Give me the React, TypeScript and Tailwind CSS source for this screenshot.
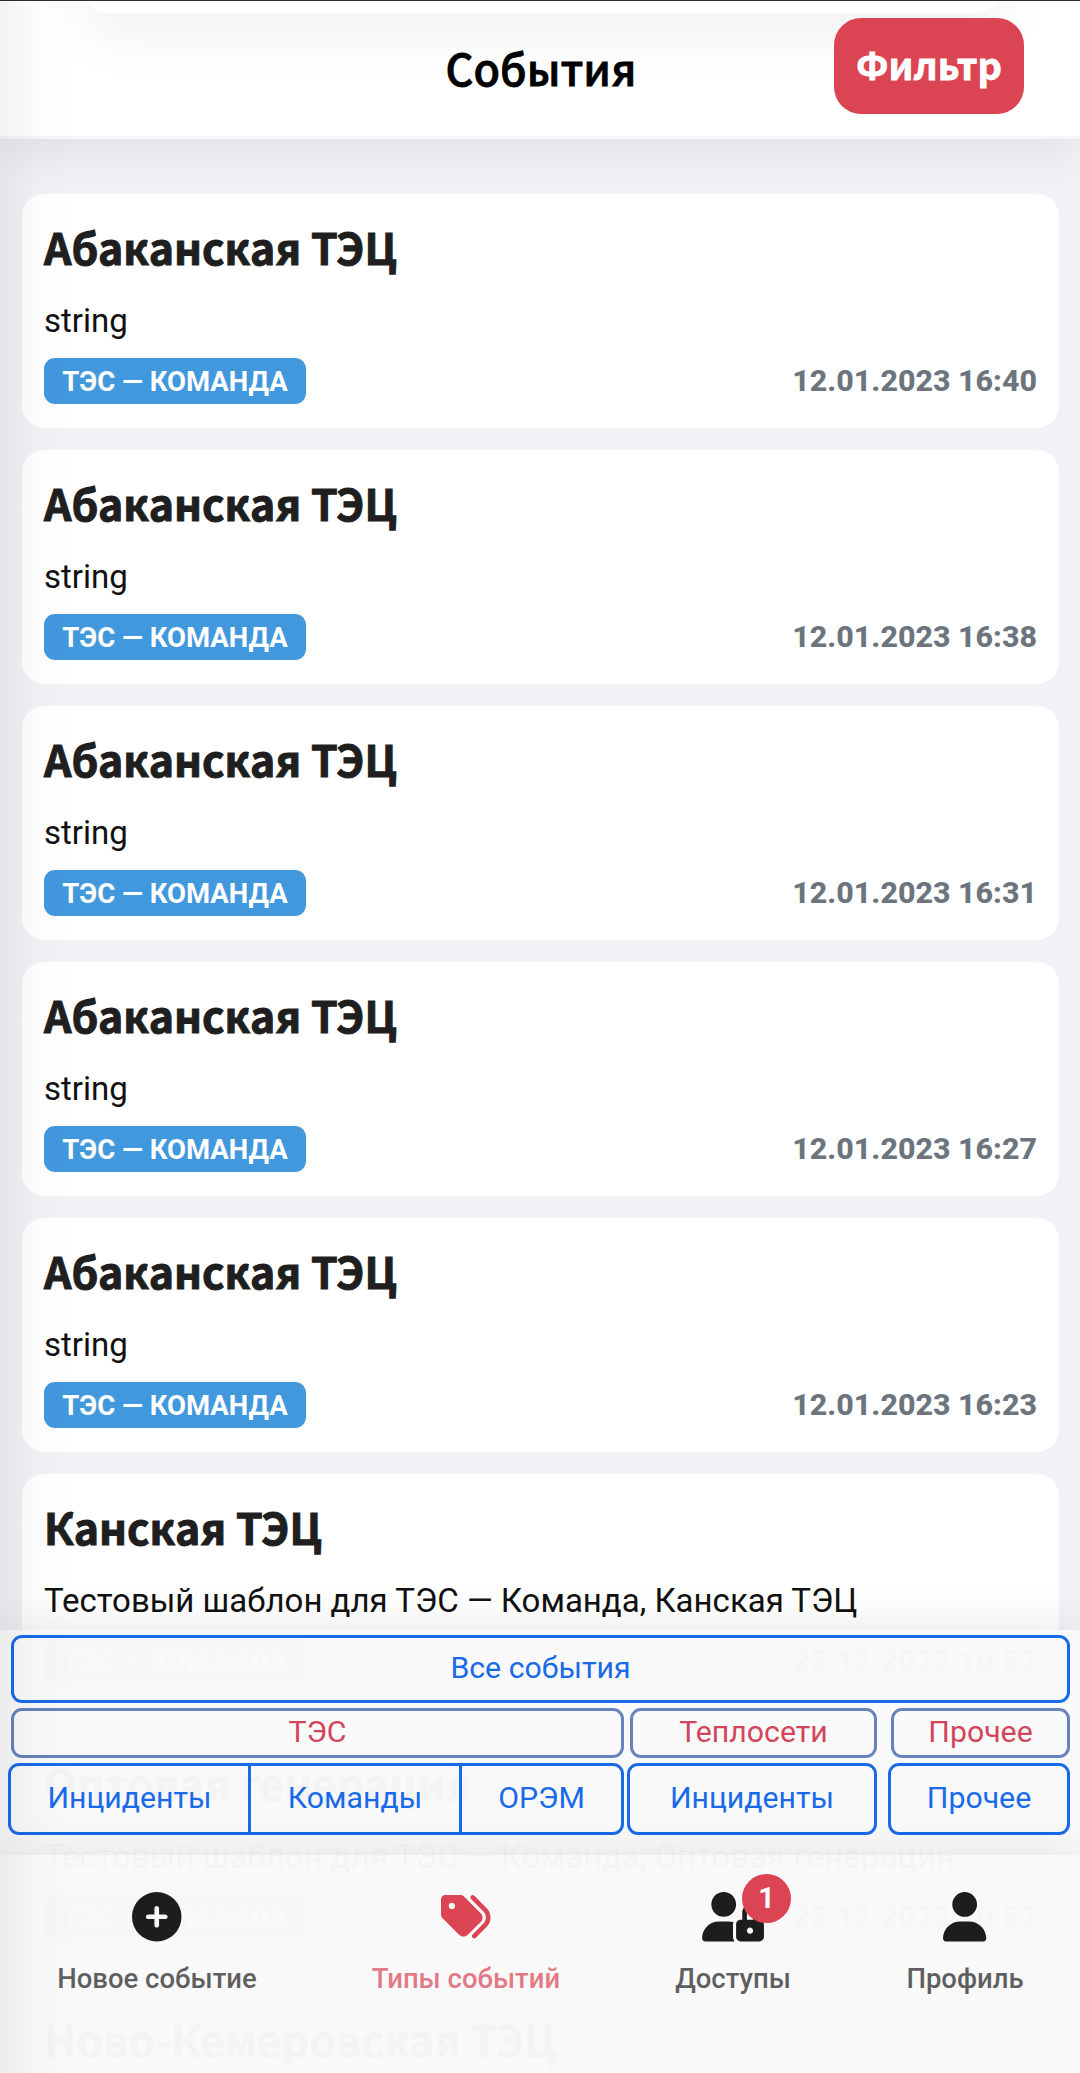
import type { ReactNode } from "react"
import { FaCirclePlus, FaTags, FaUser } from "react-icons/fa6"

interface EventItem {
  title: string
  text: string
  date: string
}

const events: EventItem[] = [
  { title: "Абаканская ТЭЦ", text: "string", date: "12.01.2023 16:40" },
  { title: "Абаканская ТЭЦ", text: "string", date: "12.01.2023 16:38" },
  { title: "Абаканская ТЭЦ", text: "string", date: "12.01.2023 16:31" },
  { title: "Абаканская ТЭЦ", text: "string", date: "12.01.2023 16:27" },
  { title: "Абаканская ТЭЦ", text: "string", date: "12.01.2023 16:23" },
  { title: "Канская ТЭЦ", text: "Тестовый шаблон для ТЭС — Команда, Канская ТЭЦ", date: "22.12.2022 10:52" },
  { title: "Оптовая генерация", text: "Тестовый шаблон для ТЭС — Команда, Оптовая генерация", date: "22.12.2022 10:52" },
  { title: "Ново-Кемеровская ТЭЦ", text: "", date: "" },
]

function UserLockIcon() {
  return (
    <svg viewBox="0 0 640 512" className="h-[49.5px] w-[62px]" fill="currentColor">
      <path d="M592 288H576V212.7c0-41.84-30.03-80.04-71.66-84.27C456.5 123.6 416 161.1 416 208V288h-16C373.6 288 352 309.6 352 336v128c0 26.4 21.6 48 48 48h192c26.4 0 48-21.6 48-48v-128C640 309.6 618.4 288 592 288zM496 432c-17.62 0-32-14.38-32-32s14.38-32 32-32s32 14.38 32 32S513.6 432 496 432zM528 288h-64V208c0-17.62 14.38-32 32-32s32 14.38 32 32V288z" />
      <path d="M224 256c70.7 0 128-57.31 128-128S294.7 0 224 0C153.3 0 96 57.31 96 128S153.3 256 224 256zM320 336c0-8.672 1.738-16.87 4.303-24.7C308.6 306.6 291.9 304 274.7 304H173.3C77.61 304 0 381.7 0 477.3C0 496.5 15.52 512 34.67 512h301.7C326.3 498.6 320 482.1 320 464V336z" />
    </svg>
  )
}

function Header() {
  return (
    <header className="relative z-10 h-[139px] border-b-[3px] border-[#f6f6f9] bg-white shadow-[0_14px_48px_rgba(0,0,0,0.07)]">
      <div className="absolute inset-0 overflow-hidden border-t border-[#2f2b30]">
        {/* Нижний край панели, уехавшей за верх экрана */}
        <div className="absolute -top-[60px] left-[82px] h-[72px] w-[920px] rounded-[27px] bg-white shadow-[0_22px_60px_rgba(0,0,0,0.06)]" />
      </div>
      <div className="relative grid h-full grid-cols-3">
        <h1 className="col-start-2 pt-[35px] pl-[2px] text-center font-['Noto_Sans_CJK_SC',sans-serif] text-[43.2px] leading-[64px] font-medium text-black [-webkit-text-stroke:0.8px_#000]">
          События
        </h1>
        <div className="flex justify-end pt-[18px] pr-[56px]">
          <button className="h-[96px] w-[190px] rounded-[27px] bg-[#db4453] pb-[4px] font-['Noto_Sans_CJK_SC',sans-serif] text-[38px] leading-[56px] font-bold text-white [-webkit-text-stroke:0.8px_#fff]">
            Фильтр
          </button>
        </div>
      </div>
    </header>
  )
}

function EventCard({ title, text, date }: EventItem) {
  return (
    <article className="h-[234px] shrink-0 rounded-[22px] bg-white px-[22px] pt-[22px] whitespace-nowrap">
      <h2 className="font-['Noto_Sans_CJK_SC',sans-serif] text-[42.8px] leading-[60px] font-bold text-[#1f1f1f] [-webkit-text-stroke:1px_#1f1f1f]">
        {title}
      </h2>
      {text && (
        <>
          <p className="mt-[20px] text-[33px] leading-[50px] text-[#111]">{text}</p>
          <div className="mt-3 flex items-center justify-between">
            <span className="flex h-[46px] w-[262px] items-center justify-center rounded-[11px] bg-[#4298dd] pt-[1px] text-[27.5px] font-bold text-white">
              ТЭС — КОМАНДА
            </span>
            <time className="pb-[1px] text-[30.4px] leading-[45px] font-extrabold text-[#6c757d]">{date}</time>
          </div>
        </>
      )}
    </article>
  )
}

function Caption({ children }: { children: ReactNode }) {
  return (
    <div className="flex h-[50px] items-center justify-center rounded-[11px] border-3 border-[#6683bb] pb-[2px] text-[#d3455a]">
      {children}
    </div>
  )
}

function FilterPanel() {
  return (
    <section className="h-[225px] bg-[#f9f9f9]/98 pt-[5px] text-[30.25px] text-[#186ae9] shadow-[0_-4px_44px_rgba(0,0,0,0.09)]">
      <button className="ml-[11px] flex h-[68px] w-[1059px] items-center justify-center rounded-[11px] border-3 border-[#186ae9] pb-[2px]">
        Все события
      </button>
      <div className="mt-[5px] ml-[11px] grid w-[1059px] grid-cols-[613px_247px_179px] justify-between">
        <Caption>ТЭС</Caption>
        <div className="-ml-[4px] mr-[4px]">
          <Caption>Теплосети</Caption>
        </div>
        <Caption>Прочее</Caption>
      </div>
      <div className="mt-[5px] ml-2 flex h-[72px]">
        <div className="flex w-[616px] divide-x-3 divide-[#186ae9] rounded-[11px] border-3 border-[#186ae9]">
          <button className="w-[240px] pb-[2px]">Инциденты</button>
          <button className="w-[211px] pb-[2px]">Команды</button>
          <button className="flex-1 pb-[2px]">ОРЭМ</button>
        </div>
        <button className="ml-[3px] w-[250px] rounded-[11px] border-3 border-[#186ae9] pb-[2px]">Инциденты</button>
        <button className="ml-[11px] w-[182px] rounded-[11px] border-3 border-[#186ae9] pb-[2px]">Прочее</button>
      </div>
    </section>
  )
}

function NavItem({ icon, label, className = "" }: { icon: ReactNode; label: string; className?: string }) {
  return (
    <a className={`flex flex-col items-center whitespace-nowrap ${className}`}>
      <span className="relative flex h-[50px] items-center text-[49.5px]">{icon}</span>
      <span className="mt-[20px] text-[27.5px] leading-[34px] font-medium opacity-70">{label}</span>
    </a>
  )
}

function BottomNav() {
  return (
    <nav className="relative grid h-[218px] grid-cols-[314px_304px_230px_234px] items-start bg-[#f9f9f9]/98 pt-[37px] text-[#1d1d1d] shadow-[0_-4px_36px_rgba(0,0,0,0.08)]">
      <NavItem icon={<FaCirclePlus />} label="Новое событие" />
      <NavItem className="text-[#db4453]" icon={<FaTags />} label="Типы событий" />
      <NavItem
        icon={
          <>
            <UserLockIcon />
            <span className="absolute -top-[18px] left-[40px] flex size-[49px] items-center justify-center rounded-full bg-[#db4453] text-[29px] font-bold text-white">
              1
            </span>
          </>
        }
        label="Доступы"
      />
      <NavItem icon={<FaUser className="h-[49.5px] w-[43.3px]" />} label="Профиль" />
    </nav>
  )
}

export default function App() {
  return (
    <div className="relative h-[2073px] w-[1080px] overflow-hidden bg-[#f2f1f6] font-[Roboto,sans-serif]">
      <Header />
      <main className="flex flex-col gap-[22px] pt-[55px] pr-[21px] pl-[22px]">
        {events.map((event, i) => (
          <EventCard key={i} {...event} />
        ))}
      </main>
      <div className="absolute inset-x-0 bottom-0 z-10">
        <FilterPanel />
        <BottomNav />
      </div>
      {/* Тень от скрытого бокового меню */}
      <div className="pointer-events-none absolute inset-y-0 left-0 z-20 w-[80px] bg-linear-to-r from-black/5 via-black/1 to-transparent" />
    </div>
  )
}
